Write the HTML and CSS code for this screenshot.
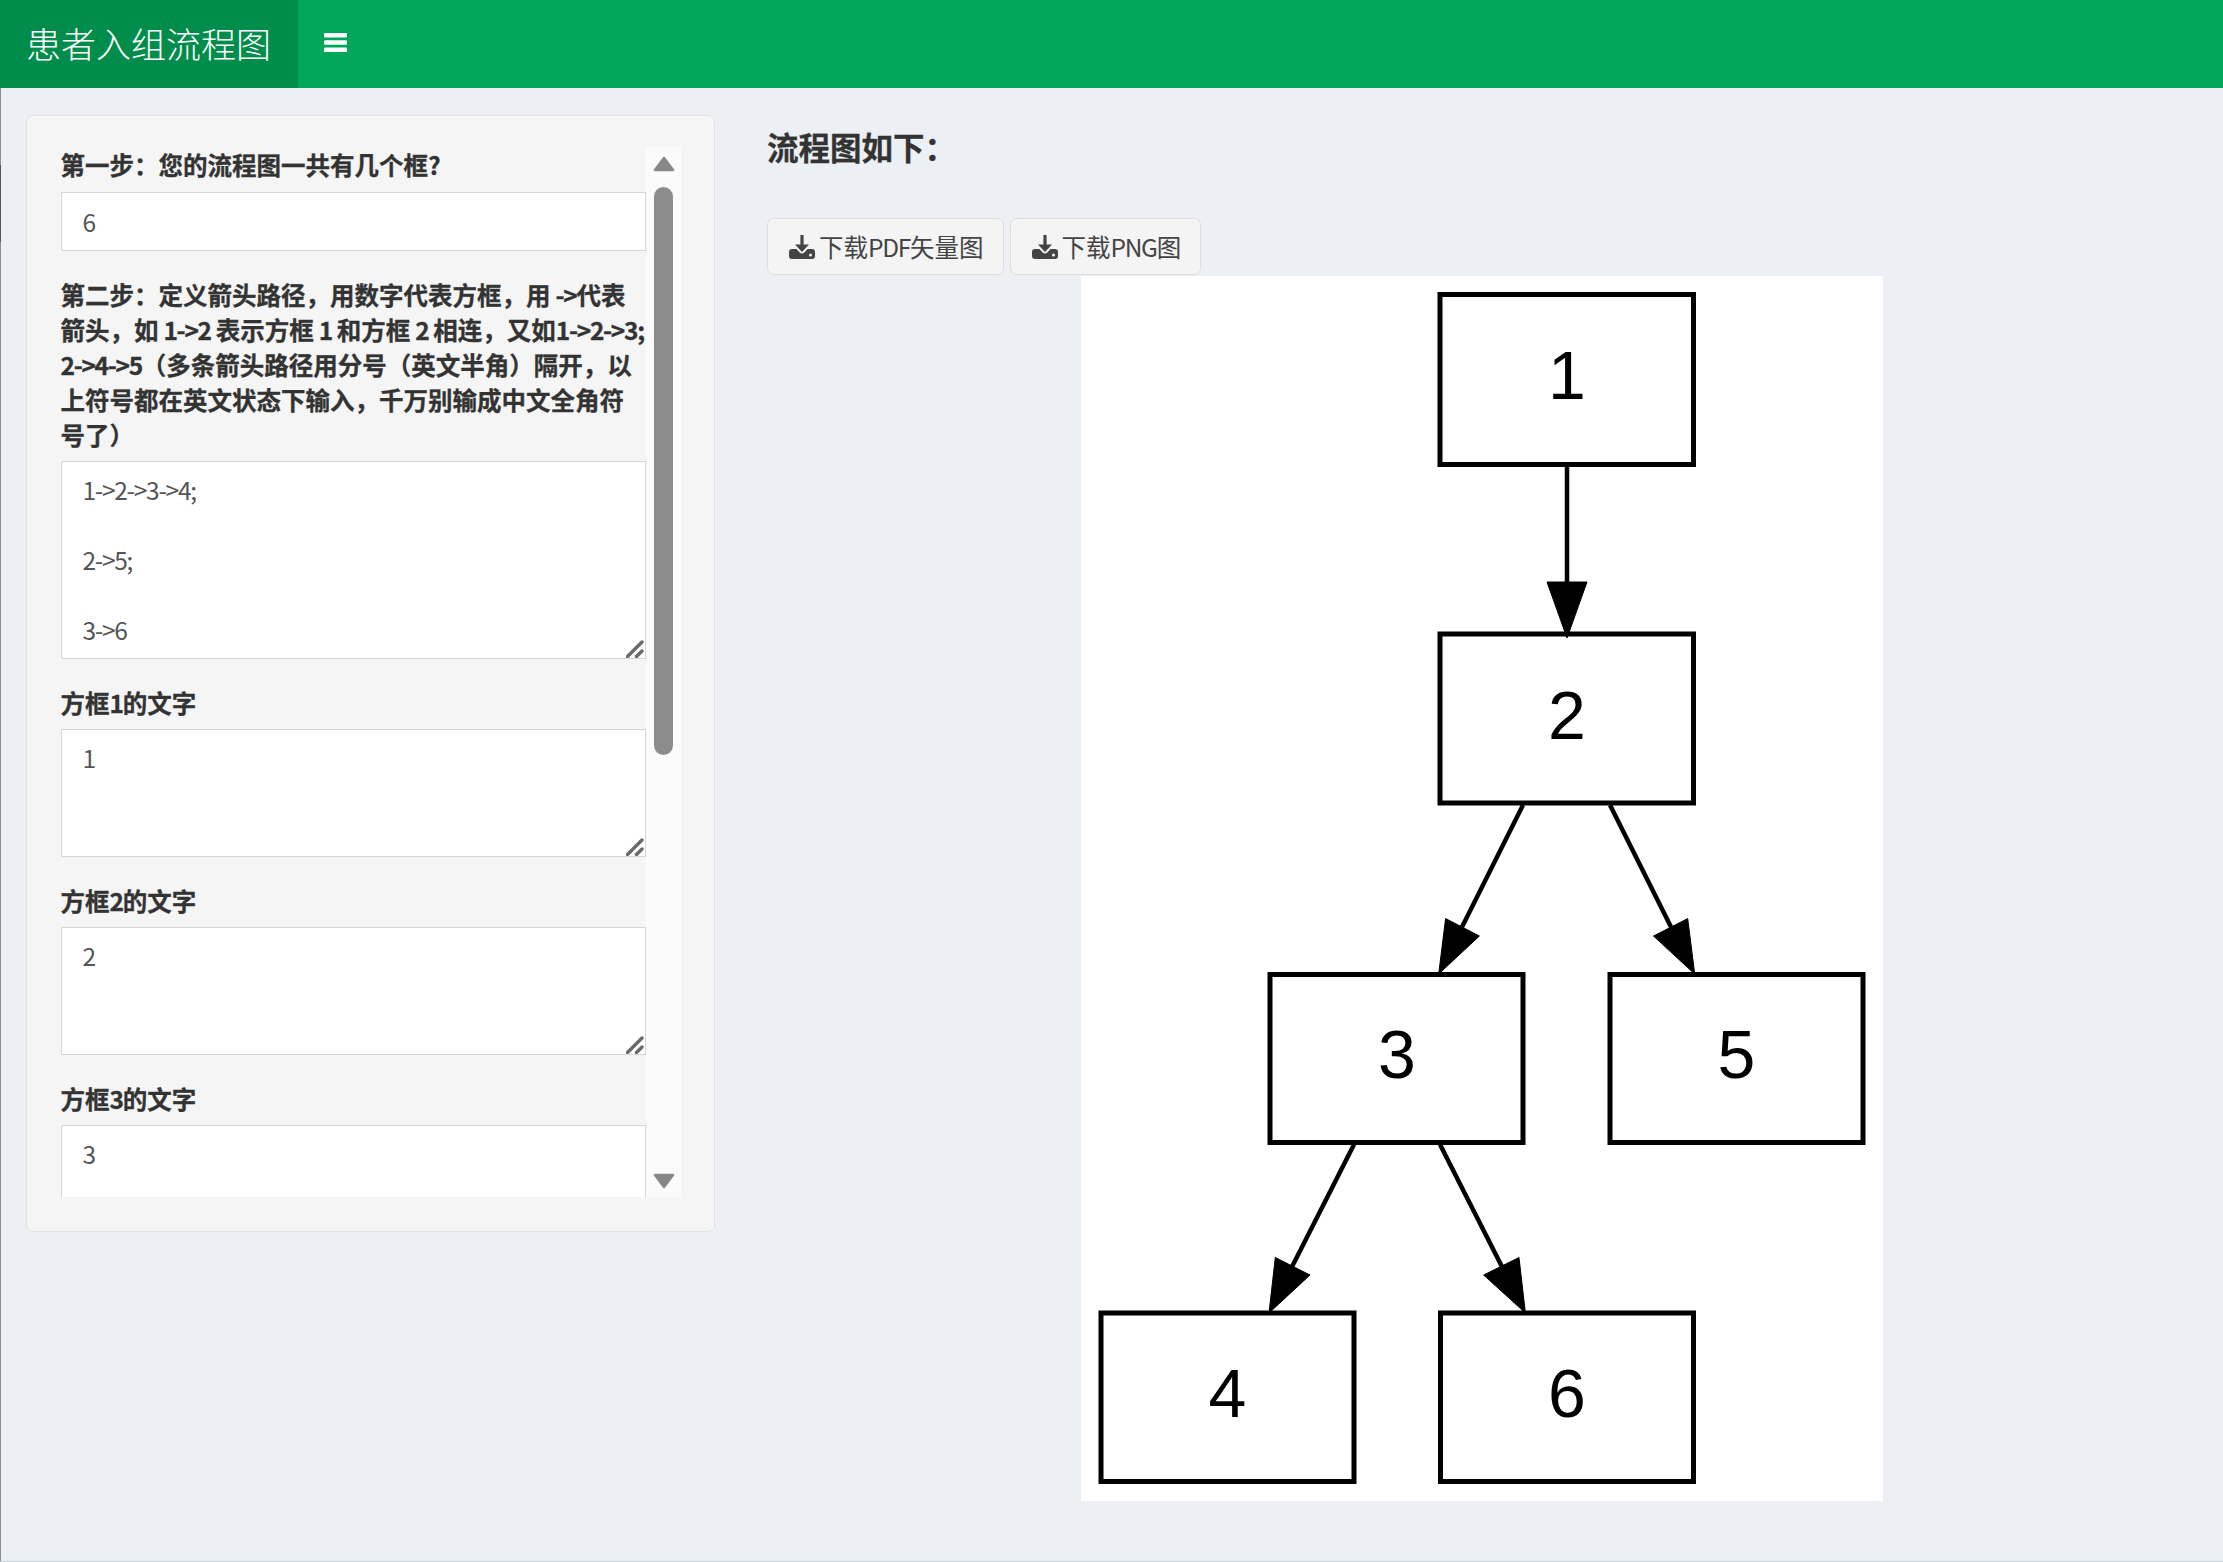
FILE: index.html
```html
<!DOCTYPE html>
<html lang="zh">
<head>
<meta charset="utf-8">
<title>患者入组流程图</title>
<link rel="stylesheet" href="styles.css">
</head>
<body>
<header class="navbar">
  <div class="brand">患者入组流程图</div>
  <button class="toggle" type="button" aria-label="菜单">
    <svg class="bars" viewBox="0 0 23 19" width="23" height="19"><rect y="0" width="23" height="4.6" rx="1"/><rect y="7.2" width="23" height="4.6" rx="1"/><rect y="14.4" width="23" height="4.6" rx="1"/></svg>
  </button>
</header>
<main class="content">
  <section class="col-left">
    <div class="well">
      <div class="scroller">
        <form class="form">
          <div class="group">
            <label class="label label-first">第一步：您的流程图一共有几个框?</label>
            <input class="control input" type="text" value="6">
          </div>
          <div class="group">
            <label class="label nowrap">第二步：定义箭头路径，用数字代表方框，用 <span class="lat">-&gt;</span>代表<br>箭头，如 <span class="lat">1-&gt;2</span> 表示方框 <span class="lat">1</span> 和方框 <span class="lat">2</span> 相连，又如<span class="lat">1-&gt;2-&gt;3;</span><br><span class="lat">2-&gt;4-&gt;5</span>（多条箭头路径用分号（英文半角）隔开，以<br>上符号都在英文状态下输入，千万别输成中文全角符<br>号了）</label>
            <div class="area-wrap">
              <textarea class="control area area-big">1-&gt;2-&gt;3-&gt;4;

2-&gt;5;

3-&gt;6</textarea>
              <svg class="grip" viewBox="0 0 18 18" width="18" height="18"><path d="M1.5 16.5 16 2M10.5 16.5 16 11"/></svg>
            </div>
          </div>
          <div class="group">
            <label class="label">方框<span class="lat">1</span>的文字</label>
            <div class="area-wrap">
              <textarea class="control area">1</textarea>
              <svg class="grip" viewBox="0 0 18 18" width="18" height="18"><path d="M1.5 16.5 16 2M10.5 16.5 16 11"/></svg>
            </div>
          </div>
          <div class="group">
            <label class="label">方框<span class="lat">2</span>的文字</label>
            <div class="area-wrap">
              <textarea class="control area">2</textarea>
              <svg class="grip" viewBox="0 0 18 18" width="18" height="18"><path d="M1.5 16.5 16 2M10.5 16.5 16 11"/></svg>
            </div>
          </div>
          <div class="group">
            <label class="label">方框<span class="lat">3</span>的文字</label>
            <div class="area-wrap">
              <textarea class="control area">3</textarea>
              <svg class="grip" viewBox="0 0 18 18" width="18" height="18"><path d="M1.5 16.5 16 2M10.5 16.5 16 11"/></svg>
            </div>
          </div>
        </form>
        <div class="scrollbar">
          <svg class="arrow" viewBox="0 0 22 16" width="22" height="16"><path d="M11 2 20 14H2Z"/></svg>
          <div class="thumb"></div>
          <svg class="arrow arrow-down" viewBox="0 0 22 16" width="22" height="16"><path d="M2 2H20L11 14Z"/></svg>
        </div>
      </div>
    </div>
  </section>
  <section class="col-right">
    <h4 class="title">流程图如下：</h4>
    <div class="actions">
      <a class="btn">
        <svg class="dl" viewBox="0 0 26 24" width="26" height="24"><path fill-rule="evenodd" d="M11.400 0h3.200v9.500H20l-7 7.500-7-7.500h5.400ZM3 14h4.400l3.300 3.600c1.300 1.300 3.300 1.300 4.600 0L18.600 14H23a3 3 0 0 1 3 3v4a3 3 0 0 1-3 3H3a3 3 0 0 1-3-3v-4a3 3 0 0 1 3-3Zm18.500 4.500a1.500 1.500 0 1 0 0 3 1.500 1.500 0 0 0 0-3Z"/></svg><span>下载<span class="lat">PDF</span>矢量图</span>
      </a>
      <a class="btn">
        <svg class="dl" viewBox="0 0 26 24" width="26" height="24"><path fill-rule="evenodd" d="M11.400 0h3.200v9.500H20l-7 7.500-7-7.500h5.400ZM3 14h4.400l3.300 3.600c1.300 1.300 3.300 1.300 4.600 0L18.600 14H23a3 3 0 0 1 3 3v4a3 3 0 0 1-3 3H3a3 3 0 0 1-3-3v-4a3 3 0 0 1 3-3Zm18.500 4.500a1.500 1.500 0 1 0 0 3 1.500 1.500 0 0 0 0-3Z"/></svg><span>下载<span class="lat">PNG</span>图</span>
      </a>
    </div>
    <svg class="chart" viewBox="1081 276 802 1225" width="802" height="1225">
      <g class="nodes">
        <rect x="1440" y="294.500" width="253.500" height="170"/>
        <rect x="1440" y="634" width="253.500" height="169"/>
        <rect x="1270" y="974.500" width="253" height="168"/>
        <rect x="1610" y="974.500" width="253" height="168"/>
        <rect x="1101" y="1313" width="253" height="168.500"/>
        <rect x="1440.500" y="1313" width="253" height="168.500"/>
      </g>
      <g class="edges">
        <path d="M1567 465V584"/>
        <path d="M1523 805 1462 927"/>
        <path d="M1610 805 1671 927"/>
        <path d="M1354 1144.500 1292 1266.700"/>
        <path d="M1440 1144.500 1502 1266.700"/>
      </g>
      <g class="heads">
        <path d="M1547 582H1587L1567 638Z"/>
        <path d="M1445.600 918.600 1479.400 936 1438.700 974Z"/>
        <path d="M1687.700 918.600 1653.500 936 1694.700 974Z"/>
        <path d="M1275.300 1257.500 1310 1275 1269 1313Z"/>
        <path d="M1519 1257.500 1483.700 1275 1525.400 1313Z"/>
      </g>
      <g class="digits">
        <text x="1567" y="399">1</text>
        <text x="1567" y="738.500">2</text>
        <text x="1397" y="1078">3</text>
        <text x="1736.500" y="1078">5</text>
        <text x="1227.500" y="1417">4</text>
        <text x="1567" y="1417">6</text>
      </g>
    </svg>
  </section>
</main>
</body>
</html>
```
FILE: styles.css
```css
* { box-sizing: border-box; }
html, body { margin: 0; height: 100%; }
body {
  min-height: 1562px;
  display: flex;
  flex-direction: column;
  background: #ecf0f5;
  color: #333;
  font-family: "Noto Sans CJK SC", "Noto Sans", sans-serif;
  font-size: 24.5px;
  line-height: 35px;
  overflow: hidden;
}
.lat { letter-spacing: -1.3px; }
.navbar {
  display: flex;
  flex: none;
  height: 88px;
  background: #00a65a;
}
.brand {
  width: 298px;
  padding: 0 26px;
  background: #008d4c;
  color: #fff;
  font-size: 35px;
  font-weight: 300;
  line-height: 86px;
  white-space: nowrap;
}
.toggle {
  display: flex;
  align-items: center;
  border: 0;
  padding: 0 0 4px 26px;
  background: none;
}
.bars { fill: #fff; }
.content {
  display: flex;
  flex: 1;
  align-items: flex-start;
  padding-left: 1px;
  border-bottom: 1px solid #c8d0d8;
  background: linear-gradient(to bottom, #8a9199 0 77px, #4f5a62 77px 154px, #8a9199 154px) left top / 1px 100% no-repeat;
}
.col-left {
  flex: none;
  width: 740px;
  padding: 27px 0 0 25px;
}
.well {
  width: 689px;
  height: 1116.5px;
  padding: 31px 33px 32.5px 33.5px;
  background: #f5f5f5;
  border: 1.75px solid #e3e3e3;
  border-radius: 7px;
}
.scroller {
  display: flex;
  height: 1050px;
  overflow: hidden;
}
.form {
  flex: none;
  width: 585px;
  overflow: hidden;
}
.group { margin-bottom: 26.25px; }
.label {
  display: block;
  margin-bottom: 8.75px;
  font-weight: 700;
  word-spacing: -0.6px;
  -webkit-text-stroke: 0.3px #333;
}
.label-first { margin-bottom: 10.25px; }
.nowrap { white-space: nowrap; }
.control {
  display: block;
  width: 100%;
  padding: 10.5px 21px;
  border: 1.75px solid #d2d6de;
  border-radius: 0;
  background: #fff;
  color: #555;
  font: inherit;
  letter-spacing: -1.3px;
  outline: 0;
}
.input { height: 58.5px; }
.area { height: 128px; resize: none; overflow: hidden; }
.area-big { height: 198px; }
.area-wrap { position: relative; }
.grip {
  position: absolute;
  right: 1.5px;
  bottom: 1px;
  fill: none;
  stroke: #6a6a6a;
  stroke-width: 3.4;
  stroke-linecap: round;
  pointer-events: none;
}
.scrollbar {
  display: flex;
  flex: none;
  flex-direction: column;
  align-items: center;
  width: 36px;
  height: 100%;
  padding-top: 9px;
  background: #fbfbfb;
}
.arrow {
  flex: none;
  fill: #888;
  stroke: #888;
  stroke-width: 2.5;
  stroke-linejoin: round;
}
.arrow-down { margin-top: 418px; }
.thumb {
  flex: none;
  width: 19px;
  height: 568px;
  margin-top: 15px;
  border-radius: 10px;
  background: #8c8c8c;
}
.col-right {
  flex: 1;
  min-width: 0;
  padding: 0 26px;
}
.title {
  margin: 41px 0 54px;
  font-size: 31.5px;
  line-height: 35px;
  font-weight: 700;
  -webkit-text-stroke: 0.3px #333;
}
.actions { display: flex; gap: 6px; }
.btn {
  display: flex;
  align-items: center;
  height: 57px;
  padding: 0 19px 0 21px;
  gap: 4px;
  border: 1.75px solid #ddd;
  border-radius: 7px;
  background: #f4f4f4;
  color: #444;
  white-space: nowrap;
}
.dl { fill: #444; flex: none; }
.chart {
  display: block;
  margin: 1px auto 0;
  background: #fff;
}
.nodes rect { fill: none; stroke: #000; stroke-width: 5; }
.edges path { fill: none; stroke: #000; stroke-width: 4.5; }
.heads path { fill: #000; stroke: #000; stroke-width: 1; }
.digits text {
  font-family: "Liberation Sans", Arial, sans-serif;
  font-size: 68px;
  text-anchor: middle;
  fill: #000;
}
```
